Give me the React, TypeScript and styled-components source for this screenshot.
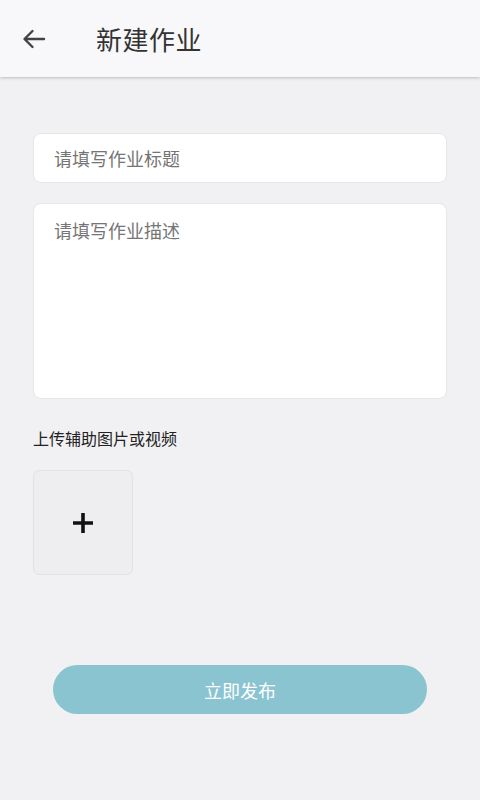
import React, { useState } from "react";
import styled, { createGlobalStyle } from "styled-components";

const GlobalStyle = createGlobalStyle`
  html, body {
    margin: 0;
    padding: 0;
    background: #f1f0f2;
    font-family: "Noto Sans CJK SC", "Noto Sans", sans-serif;
  }
  * {
    box-sizing: border-box;
  }
`;

export default function App() {
  const [title, setTitle] = useState("");
  const [desc, setDesc] = useState("");

  return (
    <>
      <GlobalStyle />
      <Page>
        <Header>
          <BackButton aria-label="back">
            <svg width="24" height="20" viewBox="0 0 24 20" fill="none">
              <path
                d="M22 10H3M10.5 2L2.5 10L10.5 18"
                stroke="#434343"
                strokeWidth="2.4"
                strokeLinecap="round"
                strokeLinejoin="round"
              />
            </svg>
          </BackButton>
          <Title>新建作业</Title>
        </Header>

        <Form>
          <TitleInput
            value={title}
            onChange={(e) => setTitle(e.target.value)}
            placeholder="请填写作业标题"
          />
          <DescInput
            value={desc}
            onChange={(e) => setDesc(e.target.value)}
            placeholder="请填写作业描述"
          />
          <Label>上传辅助图片或视频</Label>
          <UploadBox>
            <svg width="22" height="22" viewBox="0 0 22 22">
              <path d="M11 1V21M1 11H21" stroke="#111" strokeWidth="3.6" />
            </svg>
          </UploadBox>
        </Form>

        <Footer>
          <PublishButton>立即发布</PublishButton>
        </Footer>
      </Page>
    </>
  );
}

const Page = styled.div`
  min-height: 800px;
  background: #f1f0f2;
  display: flex;
  flex-direction: column;
`;

const Header = styled.div`
  height: 77px;
  background: #f8f7f9;
  display: flex;
  align-items: center;
  padding-left: 22px;
  box-shadow: 0 1px 3px rgba(0, 0, 0, 0.22);
  position: relative;
  z-index: 1;
`;

const BackButton = styled.div`
  width: 24px;
  height: 20px;
  display: flex;
  align-items: center;
  justify-content: center;
  cursor: pointer;
`;

const Title = styled.div`
  margin-left: 50px;
  font-size: 26px;
  color: #333333;
  letter-spacing: 0.5px;
`;

const Form = styled.div`
  display: flex;
  flex-direction: column;
  padding: 56px 33px 0 33px;
`;

const fieldBase = `
  width: 414px;
  background: #ffffff;
  border: 1px solid #e6e5e8;
  border-radius: 8px;
  outline: none;
  font-family: "Noto Sans CJK SC", "Noto Sans", sans-serif;
  font-size: 18px;
  color: #333333;
  padding: 0 20px;

  ::placeholder {
    color: #ababad;
  }
`;

const TitleInput = styled.input`
  ${fieldBase}
  height: 50px;
`;

const DescInput = styled.textarea`
  ${fieldBase}
  height: 196px;
  margin-top: 20px;
  padding-top: 12px;
  resize: none;
  line-height: 28px;
`;

const Label = styled.div`
  margin-top: 27px;
  font-size: 16px;
  color: #222222;
  line-height: 24px;
`;

const UploadBox = styled.div`
  margin-top: 20px;
  width: 100px;
  height: 105px;
  background: #eeedf0;
  border: 1px solid #e2e1e4;
  border-radius: 6px;
  display: flex;
  align-items: center;
  justify-content: center;
  cursor: pointer;
`;

const Footer = styled.div`
  padding: 90px 53px 0 53px;
`;

const PublishButton = styled.div`
  width: 374px;
  height: 49px;
  border-radius: 25px;
  background: #8ac4d1;
  color: #ffffff;
  font-size: 18px;
  display: flex;
  align-items: center;
  justify-content: center;
  cursor: pointer;
`;
